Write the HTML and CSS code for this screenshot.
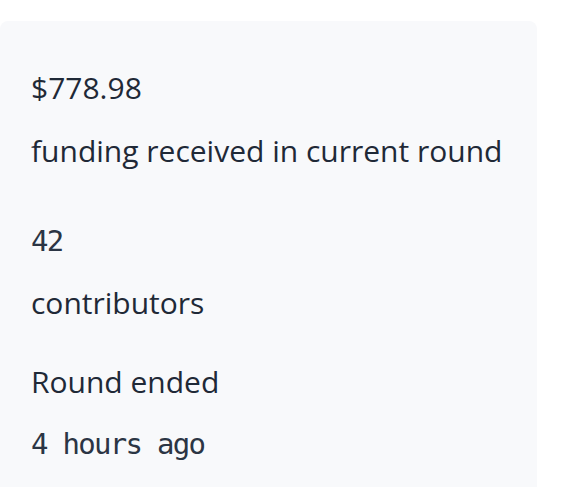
FILE: index.html
```html
<!DOCTYPE html>
<html lang="en">
<head>
<meta charset="utf-8">
<title>Round stats</title>
<link rel="stylesheet" href="styles.css">
</head>
<body>
  <section class="card">
    <div class="stat">
      <div class="value sans">$778.98</div>
      <div class="label">funding received in current round</div>
    </div>
    <div class="stat">
      <div class="value mono">42</div>
      <div class="label">contributors</div>
    </div>
    <div class="stat stat-last">
      <div class="label">Round ended</div>
      <div class="value mono">4 hours ago</div>
    </div>
  </section>
</body>
</html>
```

FILE: styles.css
```css
html, body {
  margin: 0;
  padding: 0;
  background: #ffffff;
}

body {
  padding-top: 21px;
  font-family: "Open Sans", "Noto Sans", sans-serif;
  color: #1f2937;
}

.card {
  width: 537px;
  min-height: 480px;
  box-sizing: border-box;
  background: #f8f9fb;
  border-radius: 8px;
  padding: 47px 0 0 31px;
}

.stat {
  display: flex;
  flex-direction: column;
  gap: 23px;
  margin-bottom: 50px;
}

.stat + .stat {
  gap: 22px;
}

.stat-last {
  margin-top: -11px;
  gap: 16px;
}

.value,
.label {
  line-height: 40px;
  white-space: nowrap;
}

.sans,
.label {
  font-family: "Open Sans", "Noto Sans", sans-serif;
  font-size: 30px;
}

.mono {
  font-family: "DejaVu Sans Mono", "Liberation Mono", monospace;
  font-size: 29px;
  letter-spacing: -1.7px;
  color: #2b3544;
}
```
